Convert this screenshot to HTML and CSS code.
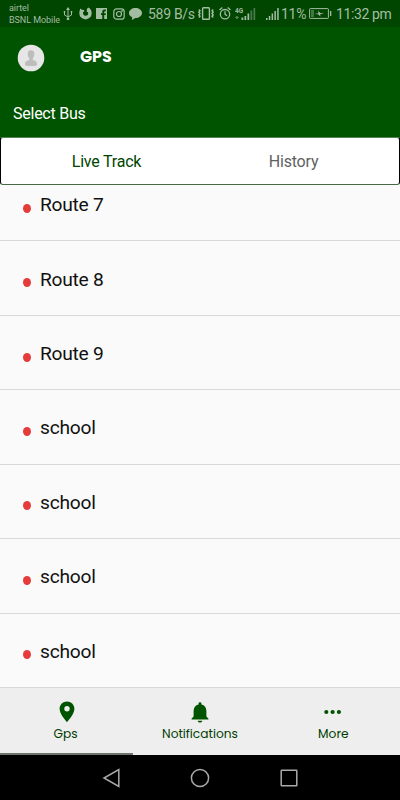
FILE: index.html
```html
<!DOCTYPE html>
<html lang="en">
<head>
<meta charset="utf-8">
<title>GPS</title>
<link rel="stylesheet" href="styles.css">
</head>
<body>
<div class="status">
  <div class="carrier"><span>airtel</span><span>BSNL Mobile</span></div>
  <svg class="usb" width="10" height="14" viewBox="0 0 10 14" fill="none" stroke="currentColor"><path d="M5 2v10M1.500 5v3L5 10l3.500-2V5"/><path d="M5 0l2 3H3zM3.800 11h2.400v2H3.800zM.7 4h1.600v1.500H.7zM7.700 4h1.600v1.500H7.700z" fill="currentColor" stroke="none"/></svg>
  <svg class="fox" width="13" height="13" viewBox="0 0 13 13" fill="currentColor"><path d="M1.300 1.500l1.500 1.200L5 3l.3 1.300L4 5.200c-.2 2.300 1 3.600 2.700 3.600 1.900 0 2.900-1.500 2.400-3.200L7.700 4.500 8 1.800 9.500.5c2 1.100 3.200 3.200 3.200 5.700a6.200 6.200 0 0 1-12.400 0c0-1.800.4-3.400 1-4.700z"/></svg>
  <svg class="fb" width="11" height="11" viewBox="0 0 11 11"><path fill="currentColor" fill-rule="evenodd" d="M0 0h11v11H8.200V7h1.500V5.300H8.200V4c0-.6.300-.8.900-.8h.8V1.600H8.500C7 1.600 6.300 2.400 6.300 3.700v1.600H5V7h1.300v4H0z"/></svg>
  <svg class="insta" width="12" height="12" viewBox="0 0 12 12" fill="none" stroke="currentColor" stroke-width="1.200"><rect x=".8" y=".8" width="10.400" height="10.400" rx="2.800"/><circle cx="6" cy="6" r="2.500"/><circle cx="9" cy="3" r=".3"/></svg>
  <svg class="chat" width="13" height="12" viewBox="0 0 13 12" fill="currentColor"><path d="M6.500 0C10 0 13 2.100 13 5s-3 5-6.500 5l-3.700 2 .4-2.700C1.200 8.500 0 7 0 5c0-2.900 3-5 6.500-5z"/></svg>
  <span class="speed">589 B/s</span>
  <svg class="vib" width="16" height="13" viewBox="0 0 16 13" fill="none" stroke="currentColor" stroke-width="1.400"><rect x="4.600" y=".8" width="6.800" height="11.400" rx=".8"/><path d="M.8 2.500l1.200 1.300L.8 5.200 2 6.500.8 7.800 2 9.200.8 10.500M15.200 2.500L14 3.800l1.200 1.400L14 6.500l1.200 1.300L14 9.200l1.200 1.300"/></svg>
  <svg class="alarm" width="12" height="13" viewBox="0 0 12 13" fill="none" stroke="currentColor" stroke-width="1.300"><circle cx="6" cy="7.200" r="4.700"/><path d="M.5 3L3.300.6M11.500 3L8.700.6M6 4.200v3l2 1.500"/></svg>
  <svg class="sig4" width="21" height="13" viewBox="0 0 21 13" fill="currentColor"><path d="M6.500 10.500h1.800V13H6.500zM9.500 9h1.700v4H9.500zM12.500 6.500h1.700V13h-1.700z"/><path opacity=".45" d="M15.500 3.500h1.700V13h-1.700zM18.500 1h1.700v12h-1.700zM0 10h4v1H0zM1 9h2v3H1z"/><text class="g4" x="0" y="5.500">4G</text></svg>
  <svg class="sig" width="13" height="12" viewBox="0 0 13 12" fill="currentColor"><path d="M0 10h1.500v2H0zM2.800 8h1.500v4H2.800zM5.600 5.500h1.500V12H5.600zM8.400 3h1.500v9H8.400zM11.200 0h1.500v12h-1.500z"/></svg>
  <span class="pct">11%</span>
  <svg class="bat" width="23" height="11" viewBox="0 0 23 11"><rect x=".6" y=".6" width="18.800" height="9.800" rx=".7" fill="none" stroke="currentColor"/><path fill="currentColor" opacity=".4" d="M2 2h3v7H2z"/><path fill="currentColor" d="M5.500 6l4-.8L9 2.500 11.200 5l4 .5-4.200.8.500 2.200L9 6.300zM21 3h1.300v5H21z"/></svg>
  <span class="clock">11:32 pm</span>
</div>
<header class="head">
  <div class="bar">
    <svg class="avatar" width="28" height="28" viewBox="0 0 28 28"><circle cx="14" cy="14" r="13.300" fill="#e6e6e6"/><path fill="#bdbdbd" d="M14 6.200c2.300 0 3.500 1.500 3.300 3.800-.1 2-.7 3.300-1.500 4.200v1.900c2.400.6 4.200 1.200 4.200 4v1c0 .6-2.500 1-6 1s-6-.4-6-1v-1c0-2.800 1.800-3.400 4.200-4v-1.900c-.8-.9-1.400-2.200-1.500-4.200-.2-2.300 1-3.800 3.300-3.800z"/></svg>
    <h1>GPS</h1>
  </div>
  <div class="sub">Select Bus</div>
</header>
<nav class="tabs"><span class="on">Live Track</span><span>History</span></nav>
<main class="list">
  <div class="row"><i></i><span>Route 7</span></div>
  <div class="row"><i></i><span>Route 8</span></div>
  <div class="row"><i></i><span>Route 9</span></div>
  <div class="row"><i></i><span>school</span></div>
  <div class="row"><i></i><span>school</span></div>
  <div class="row"><i></i><span>school</span></div>
  <div class="row"><i></i><span>school</span></div>
</main>
<nav class="bottom">
  <div class="item active"><svg width="24" height="24" viewBox="0 0 24 24"><path fill="currentColor" d="M12 1.500c-4.100 0-7.400 3.200-7.400 7.300 0 5.500 7.400 13.400 7.400 13.400s7.400-7.900 7.400-13.400c0-4.100-3.300-7.300-7.400-7.300zm0 10a2.700 2.700 0 1 1 0-5.400 2.700 2.700 0 0 1 0 5.400z"/></svg><span class="gps">Gps</span></div>
  <div class="item"><svg width="24" height="24" viewBox="0 0 24 24"><path fill="currentColor" d="M12 22.500c1.300 0 2.200-.8 2.300-1.800H9.700c.1 1 1 1.800 2.300 1.800zM18.400 16.500v-5.300c0-3.300-1.800-5.900-4.900-6.600v-.8c0-.9-.6-1.600-1.500-1.600s-1.500.7-1.500 1.600v.8c-3.100.7-4.900 3.300-4.900 6.600v5.300l-2 2v1h16.800v-1z"/></svg><span>Notifications</span></div>
  <div class="item"><svg width="24" height="24" viewBox="0 0 24 24" fill="currentColor"><circle cx="5.300" cy="12" r="2.100"/><circle cx="11.600" cy="12" r="2.100"/><circle cx="17.900" cy="12" r="2.100"/></svg><span>More</span></div>
</nav>
<footer class="sys">
  <svg width="20" height="20" viewBox="0 0 20 20"><path d="M17.800 1.500v17L3 10z"/></svg>
  <svg width="20" height="20" viewBox="0 0 20 20"><circle cx="10" cy="10" r="8.600"/></svg>
  <svg width="20" height="20" viewBox="0 0 20 20"><rect x="2.200" y="2.200" width="15.600" height="15.600" rx=".5"/></svg>
</footer>
</body>
</html>
```
FILE: styles.css
```css
* { box-sizing: border-box; }
body {
  margin: 0;
  width: 400px;
  height: 800px;
  overflow: hidden;
  display: flex;
  flex-direction: column;
  background: #fafafa;
  font-family: Roboto, "Liberation Sans", sans-serif;
}
svg { display: block; flex: none; }

.status {
  height: 27px;
  flex: none;
  display: flex;
  align-items: center;
  background: #004500;
  color: #a3bda3;
  white-space: nowrap;
}
.carrier {
  width: 51px;
  flex: none;
  margin-left: 9px;
  display: flex;
  flex-direction: column;
  font-size: 9px;
  letter-spacing: -0.050px;
  line-height: 12px;
}
.usb { margin-left: 3px; }
.fox { margin-left: 6px; }
.fb { margin-left: 4px; }
.insta { margin-left: 6px; }
.chat { margin-left: 4px; }
.speed, .pct, .clock { flex: none; font-size: 14px; letter-spacing: -0.300px; }
.speed { width: 46px; margin-left: 6px; }
.vib { margin-left: 4px; }
.alarm { margin-left: 5px; }
.sig4 { margin-left: 4px; }
.g4 { font-size: 6.500px; font-weight: 700; }
.sig { margin-left: 10px; }
.pct { width: 25px; margin-left: 2px; }
.bat { margin-left: 3px; }
.clock { margin-left: 4px; letter-spacing: -0.400px; }

.head { height: 110px; flex: none; background: #005400; color: #fff; }
.bar { height: 61px; display: flex; align-items: center; padding-left: 17px; }
.bar h1 {
  margin: -1px 0 0 35px;
  font: 700 15.900px/20px Poppins, Inter, sans-serif;
}
.sub { padding: 14px 0 0 13px; font-size: 16px; letter-spacing: -0.250px; line-height: 24px; }

.tabs {
  height: 48px;
  flex: none;
  display: flex;
  background: #fff;
  border: 1px solid #000;
  border-top-color: #55805a;
  border-bottom-color: #446b44;
  border-radius: 3px;
  box-shadow: 0 -2px 0 #005400;
  font-size: 16px;
  letter-spacing: -0.200px;
  line-height: 47px;
  color: #616161;
}
.tabs span { flex: 1; text-align: center; padding-right: 12px; }
.tabs .on { color: #004500; padding: 0 0 0 12px; }

.list {
  height: 503px;
  flex: none;
  display: flex;
  flex-direction: column;
  justify-content: flex-end;
  overflow: hidden;
}
.row {
  height: 74.450px;
  flex: none;
  display: flex;
  align-items: center;
  padding: 2px 0 0 23px;
  border-bottom: 1px solid #d8d8d8;
  font-size: 19.200px;
  letter-spacing: -0.250px;
  color: #111;
}
.row i {
  width: 8px;
  height: 9px;
  margin: 7px 9px 0 0;
  border-radius: 50%;
  background: #e53b3b;
}

.bottom { height: 67px; flex: none; display: flex; background: #eee; color: #005400; }
.item {
  flex: 1;
  display: flex;
  flex-direction: column;
  align-items: center;
  padding-top: 12px;
  font: 12.200px/19px Poppins, Inter, sans-serif;
}
.item span { color: #003c00; }
.item.active { border-bottom: 2px solid #6b756b; }
.item .gps { margin-right: 2px; }
.sys {
  height: 45px;
  flex: none;
  display: flex;
  justify-content: center;
  align-items: center;
  gap: 69px;
  background: #000;
}
.sys svg { fill: none; stroke: #aaa; stroke-width: 1.500; }
```
